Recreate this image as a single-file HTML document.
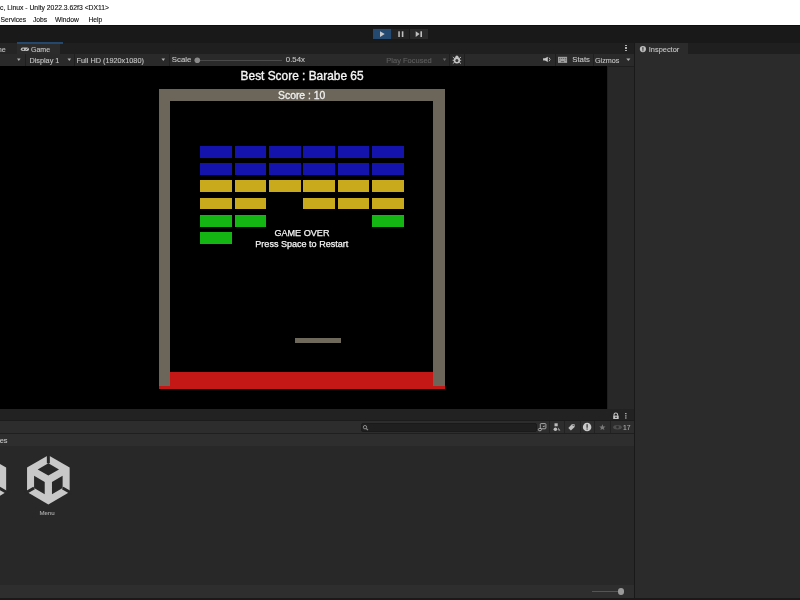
<!DOCTYPE html>
<html><head><meta charset="utf-8">
<style>
*{margin:0;padding:0;box-sizing:border-box}
html,body{width:800px;height:600px;overflow:hidden;background:#191919;font-family:"Liberation Sans",sans-serif;position:relative}
.a{position:absolute}
.t{position:absolute;white-space:nowrap;line-height:1;transform:translateZ(0);-webkit-text-stroke:0.12px currentColor}
</style></head><body>
<div class="a" style="left:0px;top:0px;width:800px;height:25px;background:#ffffff;"></div>
<div class="t" style="left:0px;top:4.5px;font-size:6.8px;color:#111;">c, Linux - Unity 2022.3.62f3 &lt;DX11&gt;</div>
<div class="t" style="left:0.5px;top:16.8px;font-size:6.7px;color:#111;">Services</div>
<div class="t" style="left:33px;top:16.8px;font-size:6.7px;color:#111;">Jobs</div>
<div class="t" style="left:55px;top:16.8px;font-size:6.7px;color:#111;">Window</div>
<div class="t" style="left:88.5px;top:16.8px;font-size:6.7px;color:#111;">Help</div>
<div class="a" style="left:0px;top:25px;width:800px;height:17px;background:#191919;"></div>
<div class="a" style="left:0px;top:25px;width:800px;height:1px;background:#0e0e0e;"></div>
<div class="a" style="left:373px;top:29px;width:18.3px;height:10px;background:#244a72;"></div>
<div class="a" style="left:392px;top:29px;width:17.2px;height:10px;background:#232323;"></div>
<div class="a" style="left:410.3px;top:29px;width:17.8px;height:10px;background:#2a2a2a;"></div>
<div class="a" style="left:0px;top:42.5px;width:634px;height:11.5px;background:#1f1f1f;"></div>
<div class="a" style="left:0px;top:42.5px;width:16.5px;height:11.5px;background:#252525;"></div>
<div class="a" style="left:17px;top:42px;width:43px;height:12px;background:#2b2b2b;"></div>
<div class="a" style="left:16.5px;top:42px;width:46.5px;height:1.8px;background:#22486e;"></div>
<div class="t" style="left:-2.3px;top:45.5px;font-size:7.2px;color:#c4c4c4;">ne</div>
<div class="t" style="left:31px;top:45.6px;font-size:7px;color:#c4c4c4;">Game</div>
<div class="a" style="left:625px;top:44.8px;width:1.8px;height:1.5px;background:#b0b0b0;"></div>
<div class="a" style="left:625px;top:47.3px;width:1.8px;height:1.5px;background:#b0b0b0;"></div>
<div class="a" style="left:625px;top:49.8px;width:1.8px;height:1.4px;background:#b0b0b0;"></div>
<div class="a" style="left:0px;top:54px;width:634px;height:11.5px;background:#2a2a2a;"></div>
<div class="a" style="left:24.5px;top:54px;width:1px;height:11.5px;background:#1f1f1f;"></div>
<div class="a" style="left:74px;top:54px;width:1px;height:11.5px;background:#1f1f1f;"></div>
<div class="a" style="left:168.5px;top:54px;width:1px;height:11.5px;background:#1f1f1f;"></div>
<div class="a" style="left:448.5px;top:54px;width:1px;height:11.5px;background:#1f1f1f;"></div>
<div class="a" style="left:463.8px;top:54px;width:1px;height:11.5px;background:#1f1f1f;"></div>
<div class="a" style="left:554.7px;top:54px;width:1px;height:11.5px;background:#1f1f1f;"></div>
<div class="a" style="left:592.6px;top:54px;width:1px;height:11.5px;background:#1f1f1f;"></div>
<div class="t" style="left:29.4px;top:56.6px;font-size:7.3px;color:#c4c4c4;">Display 1</div>
<div class="t" style="left:76.6px;top:56.6px;font-size:7.3px;color:#c4c4c4;">Full HD (1920x1080)</div>
<div class="t" style="left:171.8px;top:56.3px;font-size:7.8px;color:#c4c4c4;">Scale</div>
<div class="t" style="left:285.8px;top:56.3px;font-size:7.8px;color:#c4c4c4;">0.54x</div>
<div class="t" style="left:386.3px;top:56.6px;font-size:7.5px;color:#5e5e5e;">Play Focused</div>
<div class="t" style="left:572.2px;top:56.3px;font-size:7.8px;color:#c4c4c4;">Stats</div>
<div class="t" style="left:595px;top:56.6px;font-size:7.2px;color:#c4c4c4;">Gizmos</div>
<div class="a" style="left:200px;top:59.8px;width:82px;height:0.9px;background:#4a4a4a;"></div>
<div class="a" style="left:0px;top:65.5px;width:606.7px;height:343.7px;background:#000;"></div>
<div class="a" style="left:606.7px;top:65.5px;width:27px;height:343.7px;background:#282828;"></div>
<div class="a" style="left:606.7px;top:65.5px;width:27px;height:1.3px;background:#1e1e1e;"></div>
<div class="a" style="left:606.7px;top:65.5px;width:1.2px;height:343.7px;background:#202020;"></div>
<div class="t" style="left:240.6px;top:71.1px;font-size:11.9px;color:#f4f4f4;-webkit-text-stroke:0.35px #f4f4f4">Best Score : Barabe 65</div>
<div class="a" style="left:159px;top:372px;width:285.5px;height:17px;background:#c41816;"></div>
<div class="a" style="left:159px;top:89px;width:285.5px;height:11.7px;background:#6b6659;"></div>
<div class="a" style="left:159px;top:89px;width:11.2px;height:297px;background:#6b6659;"></div>
<div class="a" style="left:433.3px;top:89px;width:11.3px;height:297px;background:#6b6659;"></div>
<div class="t" style="left:278px;top:91.2px;font-size:10.4px;color:#f0f0f0;-webkit-text-stroke:0.3px #f0f0f0">Score : 10</div>
<div class="a" style="left:294.8px;top:337.7px;width:46.3px;height:5.7px;background:#6e695a;"></div>
<div class="a" style="left:200.2px;top:145.8px;width:31.8px;height:11.8px;background:#1414ac;"></div>
<div class="a" style="left:234.53px;top:145.8px;width:31.8px;height:11.8px;background:#1414ac;"></div>
<div class="a" style="left:268.86px;top:145.8px;width:31.8px;height:11.8px;background:#1414ac;"></div>
<div class="a" style="left:303.19px;top:145.8px;width:31.8px;height:11.8px;background:#1414ac;"></div>
<div class="a" style="left:337.52px;top:145.8px;width:31.8px;height:11.8px;background:#1414ac;"></div>
<div class="a" style="left:371.85px;top:145.8px;width:31.8px;height:11.8px;background:#1414ac;"></div>
<div class="a" style="left:200.2px;top:163.04px;width:31.8px;height:11.8px;background:#1414ac;"></div>
<div class="a" style="left:234.53px;top:163.04px;width:31.8px;height:11.8px;background:#1414ac;"></div>
<div class="a" style="left:268.86px;top:163.04px;width:31.8px;height:11.8px;background:#1414ac;"></div>
<div class="a" style="left:303.19px;top:163.04px;width:31.8px;height:11.8px;background:#1414ac;"></div>
<div class="a" style="left:337.52px;top:163.04px;width:31.8px;height:11.8px;background:#1414ac;"></div>
<div class="a" style="left:371.85px;top:163.04px;width:31.8px;height:11.8px;background:#1414ac;"></div>
<div class="a" style="left:200.2px;top:180.28px;width:31.8px;height:11.8px;background:#c9aa1c;"></div>
<div class="a" style="left:234.53px;top:180.28px;width:31.8px;height:11.8px;background:#c9aa1c;"></div>
<div class="a" style="left:268.86px;top:180.28px;width:31.8px;height:11.8px;background:#c9aa1c;"></div>
<div class="a" style="left:303.19px;top:180.28px;width:31.8px;height:11.8px;background:#c9aa1c;"></div>
<div class="a" style="left:337.52px;top:180.28px;width:31.8px;height:11.8px;background:#c9aa1c;"></div>
<div class="a" style="left:371.85px;top:180.28px;width:31.8px;height:11.8px;background:#c9aa1c;"></div>
<div class="a" style="left:200.2px;top:197.52px;width:31.8px;height:11.8px;background:#c9aa1c;"></div>
<div class="a" style="left:234.53px;top:197.52px;width:31.8px;height:11.8px;background:#c9aa1c;"></div>
<div class="a" style="left:303.19px;top:197.52px;width:31.8px;height:11.8px;background:#c9aa1c;"></div>
<div class="a" style="left:337.52px;top:197.52px;width:31.8px;height:11.8px;background:#c9aa1c;"></div>
<div class="a" style="left:371.85px;top:197.52px;width:31.8px;height:11.8px;background:#c9aa1c;"></div>
<div class="a" style="left:200.2px;top:214.76px;width:31.8px;height:11.8px;background:#14b614;"></div>
<div class="a" style="left:234.53px;top:214.76px;width:31.8px;height:11.8px;background:#14b614;"></div>
<div class="a" style="left:371.85px;top:214.76px;width:31.8px;height:11.8px;background:#14b614;"></div>
<div class="a" style="left:200.2px;top:232px;width:31.8px;height:11.8px;background:#14b614;"></div>
<div class="t" style="left:274.4px;top:228.6px;font-size:9.1px;color:#f4f4f4;-webkit-text-stroke:0.25px #f4f4f4">GAME OVER</div>
<div class="t" style="left:255.3px;top:239.6px;font-size:9.05px;color:#f4f4f4;-webkit-text-stroke:0.25px #f4f4f4">Press Space to Restart</div>
<div class="a" style="left:0px;top:409.2px;width:634px;height:12px;background:#222222;"></div>
<div class="a" style="left:0px;top:420.4px;width:634px;height:1px;background:#1c1c1c;"></div>
<div class="a" style="left:0px;top:421.4px;width:634px;height:11.6px;background:#2d2d2d;"></div>
<div class="a" style="left:360.6px;top:423.1px;width:176.4px;height:8.9px;background:#1f1f1f;border-radius:2px;border:0.5px solid #1a1a1a"></div>
<div class="a" style="left:0px;top:433px;width:634px;height:1px;background:#1f1f1f;"></div>
<div class="a" style="left:0px;top:434px;width:634px;height:12px;background:#2e2e2e;"></div>
<div class="t" style="left:-0.3px;top:436.7px;font-size:7.4px;color:#c4c4c4;">es</div>
<div class="a" style="left:0px;top:446px;width:634px;height:139px;background:#282828;"></div>
<div class="t" style="left:39.4px;top:510px;font-size:6.1px;color:#a8a8a8;">Menu</div>
<div class="a" style="left:0px;top:585px;width:634px;height:12.5px;background:#2e2e2e;"></div>
<div class="a" style="left:592px;top:591px;width:26.7px;height:1px;background:#555;"></div>
<div class="a" style="left:618.2px;top:588.4px;width:6.2px;height:6.2px;border-radius:50%;background:#9a9a9a"></div>
<div class="a" style="left:549px;top:421.4px;width:0.8px;height:11.6px;background:#222222;"></div>
<div class="a" style="left:564.2px;top:421.4px;width:0.8px;height:11.6px;background:#222222;"></div>
<div class="a" style="left:579.7px;top:421.4px;width:0.8px;height:11.6px;background:#222222;"></div>
<div class="a" style="left:594.2px;top:421.4px;width:0.8px;height:11.6px;background:#222222;"></div>
<div class="a" style="left:610.2px;top:421.4px;width:0.8px;height:11.6px;background:#222222;"></div>
<div class="t" style="left:623px;top:424.6px;font-size:6.8px;color:#a8a8a8;">17</div>
<div class="a" style="left:633.8px;top:42px;width:1.6px;height:558px;background:#191919;"></div>
<div class="a" style="left:0px;top:597.5px;width:800px;height:2.5px;background:#191919;"></div>
<div class="a" style="left:635.4px;top:54px;width:164.6px;height:543.5px;background:#2b2b2b;"></div>
<div class="a" style="left:635.4px;top:42.5px;width:164.6px;height:11.5px;background:#1f1f1f;"></div>
<div class="a" style="left:635.4px;top:42.7px;width:53px;height:11.3px;background:#2b2b2b;"></div>
<div class="t" style="left:648.8px;top:45.5px;font-size:7.4px;color:#c4c4c4;">Inspector</div>
<svg class="a" style="left:0;top:0" width="800" height="600" viewBox="0 0 800 600"><path d="M48.35,455.2 L69.65,467.5 L69.65,492.1 L48.35,504.4 L27.05,492.1 L27.05,467.5Z" fill="#c8c8c8"/><path d="M48.35,475.62 L37.7,469.47 L48.35,463.32 L59,469.47Z M49.85,463.32 L49.85,452.76 L46.85,452.76 L46.85,463.32Z M44.73,481.89 L34.08,475.74 L34.08,488.04 L44.73,494.19Z M33.33,486.74 L24.19,492.02 L25.69,494.62 L34.83,489.34Z M51.97,481.89 L62.62,475.74 L62.62,488.04 L51.97,494.19Z M61.87,489.34 L71.01,494.62 L72.51,492.02 L63.37,486.74Z" fill="#282828"/><path d="M-15.15,455.2 L6.15,467.5 L6.15,492.1 L-15.15,504.4 L-36.45,492.1 L-36.45,467.5Z" fill="#c8c8c8"/><path d="M-15.15,475.62 L-25.8,469.47 L-15.15,463.32 L-4.5,469.47Z M-13.65,463.32 L-13.65,452.76 L-16.65,452.76 L-16.65,463.32Z M-18.77,481.89 L-29.42,475.74 L-29.42,488.04 L-18.77,494.19Z M-30.17,486.74 L-39.31,492.02 L-37.81,494.62 L-28.67,489.34Z M-11.53,481.89 L-0.88,475.74 L-0.88,488.04 L-11.53,494.19Z M-1.63,489.34 L7.51,494.62 L9.01,492.02 L-0.13,486.74Z" fill="#282828"/>
<g fill="#b0b0b0">
<path d="M17,58.6 L20.6,58.6 L18.8,61Z"/>
<path d="M67.5,58.6 L71.1,58.6 L69.3,61Z"/>
<path d="M161.5,58.6 L165.1,58.6 L163.3,61Z"/>
<path d="M442.8,58.4 L446.3,58.4 L444.55,60.9Z" fill="#6a6a6a"/>
<path d="M626.3,58.6 L630.4,58.6 L628.35,61Z"/>
</g>
<rect x="20.8" y="47.6" width="8.2" height="3.5" rx="1.75" fill="#bdbdbd"/>
<circle cx="23.2" cy="49.35" r="0.9" fill="#2b2b2b"/>
<path d="M25.6,50.3 L27.6,48.3" stroke="#2b2b2b" stroke-width="0.8"/>
<circle cx="197.3" cy="60.3" r="2.8" fill="#8a8a8a"/>
<circle cx="642.9" cy="49.05" r="3.1" fill="#bdbdbd"/>
<rect x="642.35" y="47.2" width="1.1" height="2.6" fill="#2b2b2b"/>
<rect x="642.35" y="50.3" width="1.1" height="0.9" fill="#2b2b2b"/>
<g fill="#c8c8c8">
<path d="M543.1,58.3 L545,58.3 L547.8,56.8 L547.8,62.1 L545,60.6 L543.1,60.6Z"/>
<path d="M549,57.6 Q551.2,59.45 549,61.3" stroke="#c8c8c8" stroke-width="0.9" fill="none"/>
</g>
<rect x="558" y="56.8" width="9.1" height="6.1" fill="#a0a0a0"/>
<g fill="#5a5a5a">
<rect x="559.2" y="58" width="1" height="1"/><rect x="561.2" y="58" width="1" height="1"/><rect x="563.2" y="58" width="1" height="1"/><rect x="565.2" y="58" width="1" height="1"/>
<rect x="559.2" y="59.6" width="1" height="1"/><rect x="565.2" y="59.6" width="1" height="1"/>
<rect x="561" y="61.2" width="3" height="0.9"/>
</g>
<g fill="#c4c4c4">
<circle cx="456.9" cy="60.3" r="3.2"/>
<circle cx="456.9" cy="57" r="1.6"/>
<path d="M452.8,57 L454.5,58.5 M461,57 L459.3,58.5 M452.6,60.3 L454,60.3 M461.2,60.3 L459.8,60.3 M452.8,63.6 L454.5,62.2 M461,63.6 L459.3,62.2" stroke="#c4c4c4" stroke-width="0.9"/>
</g>
<circle cx="456.9" cy="60.6" r="1.5" fill="#3a3a3a"/>
<rect x="373.1" y="28.9" width="18.2" height="9.9" fill="#244a72"/>
<path d="M380,31.3 L384.7,34.1 L380,36.9Z" fill="#c8c8c8"/>
<rect x="398.3" y="31.3" width="1.5" height="5.7" fill="#c0c0c0"/>
<rect x="401.8" y="31.3" width="1.6" height="5.7" fill="#c0c0c0"/>
<path d="M415.7,31.3 L419.6,34.1 L415.7,36.9Z" fill="#c0c0c0"/>
<rect x="420.4" y="31.3" width="1.6" height="5.7" fill="#c0c0c0"/>

<circle cx="365" cy="427.2" r="1.7" fill="none" stroke="#8c8c8c" stroke-width="1"/>
<path d="M366.2,428.5 L368,430.2" stroke="#8c8c8c" stroke-width="1.1"/>
<g fill="none" stroke="#b4b4b4" stroke-width="0.9">
<rect x="540.3" y="423.6" width="5.6" height="5.2" rx="0.8"/>
<ellipse cx="539.9" cy="429.6" rx="1.6" ry="1.2" fill="#2b2b2b"/>
</g>
<path d="M542.5,427 L544.5,425.3 L544.5,427Z" fill="#b4b4b4"/>
<g fill="#bdbdbd">
<rect x="554.5" y="423.3" width="3.2" height="3"/>
<circle cx="555.4" cy="429.3" r="1.8"/>
<path d="M557.8,427.2 L560.4,430.4 L558.6,430.4Z"/>
</g>
<path d="M568.3,428 L571.8,424.2 L574.6,424.2 L574.6,427 L570.9,430.6Z" fill="#bdbdbd"/>
<circle cx="573.2" cy="425.5" r="0.6" fill="#2b2b2b"/>
<circle cx="587.1" cy="427" r="4.25" fill="#c8c8c8"/>
<rect x="586.5" y="424.2" width="1.2" height="3.6" fill="#2b2b2b"/>
<rect x="586.5" y="428.5" width="1.2" height="1.1" fill="#2b2b2b"/>
<path d="M602.4,424.3 L603.3,426.5 L605.5,426.6 L603.8,428 L604.4,430.1 L602.4,428.9 L600.4,430.1 L601,428 L599.3,426.6 L601.5,426.5Z" fill="#7a7a7a"/>
<ellipse cx="617.5" cy="427.3" rx="4.3" ry="2.2" fill="#4e4e4e"/>
<circle cx="617.5" cy="427.1" r="1.3" fill="#2b2b2b"/>
<path d="M614,415.8 L614,414.8 Q614,413 615.8,413 Q617.6,413 617.6,414.8 L617.6,415.8" fill="none" stroke="#c4c4c4" stroke-width="1.1"/>
<rect x="613.2" y="415.6" width="5.5" height="3.4" fill="#c4c4c4"/>
<rect x="615.3" y="416.7" width="1.4" height="1.3" fill="#222"/>
<rect x="625" y="413" width="1.6" height="1.2" fill="#aaa"/>
<rect x="625" y="415.3" width="1.6" height="1.2" fill="#aaa"/>
<rect x="625" y="417.4" width="1.6" height="1.2" fill="#aaa"/>
</svg>
</body></html>
